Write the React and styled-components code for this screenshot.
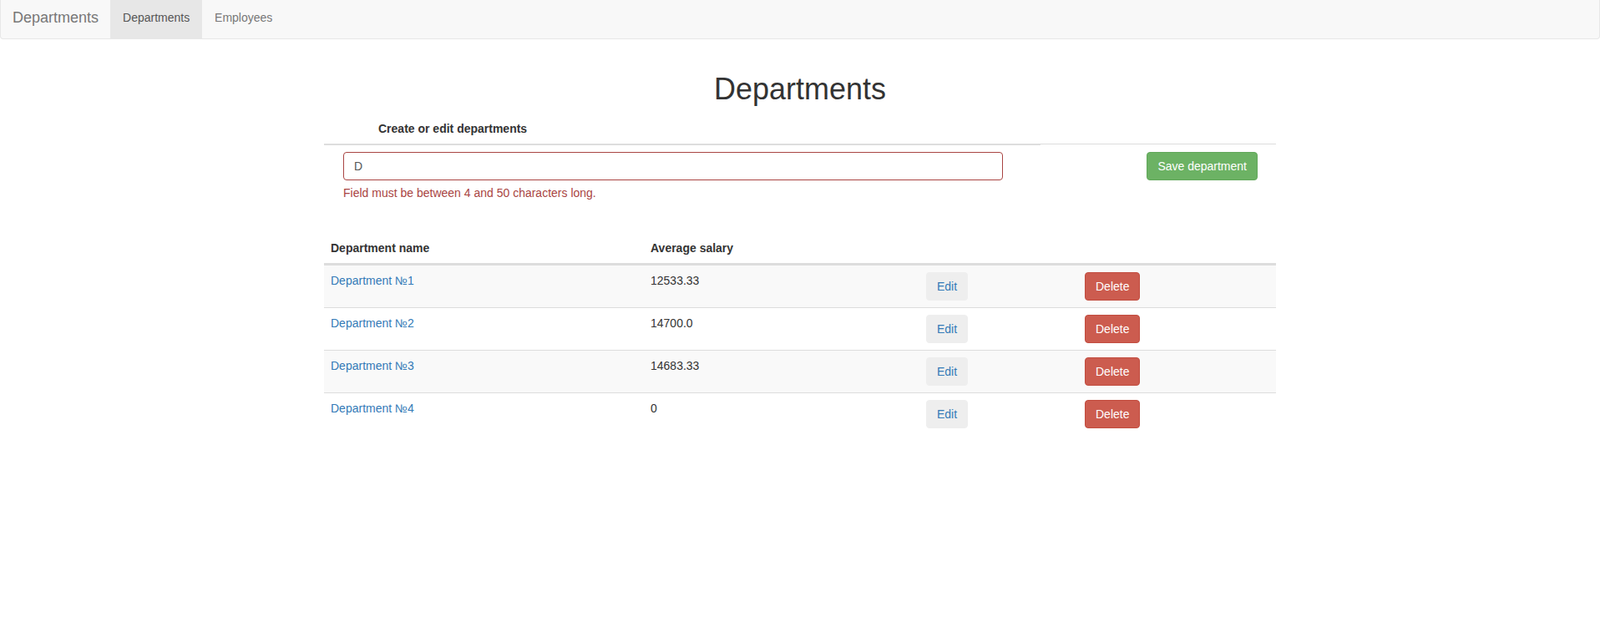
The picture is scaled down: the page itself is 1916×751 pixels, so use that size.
import React from 'react';
import styled, { createGlobalStyle } from 'styled-components';

const GlobalStyle = createGlobalStyle`
  html, body {
    margin: 0;
    padding: 0;
    background: #fff;
  }
  body {
    font-family: "Liberation Sans", Arial, sans-serif;
    font-size: 14px;
    line-height: 20px;
    color: #333;
  }
  * { box-sizing: border-box; }
`;

const Navbar = styled.nav`
  display: flex;
  align-items: stretch;
  height: 47px;
  background: #f8f8f8;
  border: 1px solid #e7e7e7;
  border-top: none;
  border-radius: 0 0 4px 4px;
`;

const Brand = styled.a`
  display: flex;
  align-items: center;
  padding: 0 14px 4px 14px;
  font-size: 18px;
  color: #777;
  text-decoration: none;
`;

const NavLink = styled.a`
  display: flex;
  align-items: center;
  padding: 0 15px 4px;
  width: ${p => p.w}px;
  color: ${p => (p.active ? '#555' : '#777')};
  background: ${p => (p.active ? '#e7e7e7' : 'transparent')};
  text-decoration: none;
`;

const Container = styled.div`
  width: 1140px;
  margin: 0 auto;
`;

const Title = styled.h1`
  margin: 40px 0 9px;
  font-size: 36px;
  line-height: 40px;
  font-weight: 500;
  text-align: center;
  color: #333;
`;

const FormHead = styled.div`
  display: flex;
  align-items: flex-start;
`;

const FormHeadCell = styled.div`
  width: 858px;
  padding: 8px 8px 8px 65px;
  font-weight: bold;
  border-bottom: 2px solid #ddd;
`;

const FormHeadRest = styled.div`
  flex: 1;
  height: 37px;
  border-bottom: 1px solid #ddd;
`;

const FormRow = styled.div`
  display: flex;
  align-items: flex-start;
  padding: 8px 22px 8px 23px;
`;

const FieldCol = styled.div`
  width: 790px;
`;

const Input = styled.input`
  display: block;
  width: 100%;
  height: 34px;
  padding: 6px 12px;
  font-family: inherit;
  font-size: 14px;
  color: #555;
  background: #fff;
  border: 1px solid #a94442;
  border-radius: 4px;
  outline: none;
`;

const HelpText = styled.div`
  margin-top: 5px;
  color: #a94442;
`;

const Spacer = styled.div`
  flex: 1;
`;

const Button = styled.button`
  height: 34px;
  padding: 0 12px;
  font-family: inherit;
  font-size: 14px;
  line-height: 20px;
  border-radius: 4px;
  border: 1px solid ${p => p.border};
  background: ${p => p.bg};
  color: ${p => p.fg};
  cursor: pointer;
`;

const Table = styled.div`
  margin-top: 30px;
`;

const Row = styled.div`
  display: grid;
  grid-template-columns: 383px 330px 190px 237px;
  background: ${p => (p.striped ? '#f9f9f9' : 'transparent')};
  border-top: ${p => (p.head ? 'none' : '1px solid #ddd')};
  border-bottom: ${p => (p.head ? '2px solid #ddd' : 'none')};
  font-weight: ${p => (p.head ? 'bold' : 'normal')};
`;

const Cell = styled.div`
  padding: 8px;
`;

const DeptLink = styled.a`
  color: #337ab7;
  text-decoration: none;
`;

const departments = [
  { name: 'Department №1', salary: '12533.33' },
  { name: 'Department №2', salary: '14700.0' },
  { name: 'Department №3', salary: '14683.33' },
  { name: 'Department №4', salary: '0' },
];

export default function App() {
  return (
    <>
      <GlobalStyle />
      <Navbar>
        <Brand href="#">Departments</Brand>
        <NavLink href="#" active w={110}>Departments</NavLink>
        <NavLink href="#">Employees</NavLink>
      </Navbar>
      <Container>
        <Title>Departments</Title>
        <FormHead>
          <FormHeadCell>Create or edit departments</FormHeadCell>
          <FormHeadRest />
        </FormHead>
        <FormRow>
          <FieldCol>
            <Input defaultValue="D" />
            <HelpText>Field must be between 4 and 50 characters long.</HelpText>
          </FieldCol>
          <Spacer />
          <Button bg="#6cb264" border="#61a85a" fg="#fff">Save department</Button>
        </FormRow>
        <Table>
          <Row head>
            <Cell>Department name</Cell>
            <Cell>Average salary</Cell>
            <Cell />
            <Cell />
          </Row>
          {departments.map((d, i) => (
            <Row key={d.name} striped={i % 2 === 0}>
              <Cell><DeptLink href="#">{d.name}</DeptLink></Cell>
              <Cell>{d.salary}</Cell>
              <Cell>
                <Button bg="#eeeeee" border="#eeeeee" fg="#337ab7">Edit</Button>
              </Cell>
              <Cell>
                <Button bg="#cc5c4f" border="#c24c3f" fg="#fff">Delete</Button>
              </Cell>
            </Row>
          ))}
        </Table>
      </Container>
    </>
  );
}
